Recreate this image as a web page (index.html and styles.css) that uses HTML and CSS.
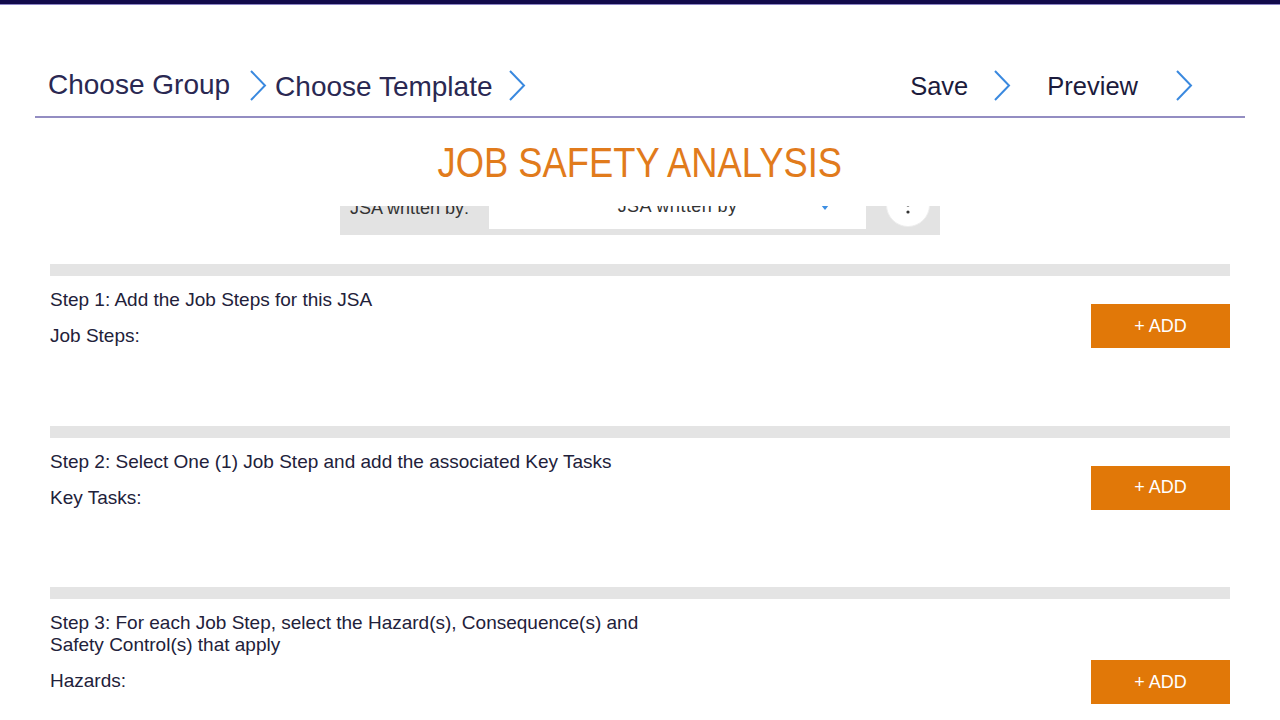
FILE: index.html
```html
<!DOCTYPE html>
<html lang="en">
<head>
<meta charset="utf-8">
<title>Job Safety Analysis</title>
<link rel="stylesheet" href="styles.css">
</head>
<body>
<div class="topbar"></div>
<nav class="nav">
  <div class="crumbs">
    <span class="crumb">Choose Group</span>
    <svg class="chev chev--tight" viewBox="0 0 18 31" width="18" height="31"><polyline points="2,1 16,15.5 2,30"/></svg>
    <span class="crumb crumb--low">Choose Template</span>
    <svg class="chev chev--after" viewBox="0 0 18 31" width="18" height="31"><polyline points="2,1 16,15.5 2,30"/></svg>
  </div>
  <div class="actions">
    <span class="action">Save</span>
    <svg class="chev chev--save" viewBox="0 0 18 31" width="18" height="31"><polyline points="2,1 16,15.5 2,30"/></svg>
    <span class="action">Preview</span>
    <svg class="chev chev--preview" viewBox="0 0 18 31" width="18" height="31"><polyline points="2,1 16,15.5 2,30"/></svg>
  </div>
</nav>
<header class="title-wrap">
  <h1 class="title">JOB SAFETY ANALYSIS</h1>
</header>
<main class="scroll">
  <div class="scroll-inner">
    <div class="jsa-row">
      <span class="jsa-label">JSA written by:</span>
      <div class="jsa-input">
        <span class="jsa-value">JSA written by</span>
        <svg class="jsa-caret" viewBox="0 0 8 5" width="8" height="5"><polygon points="0,0 8,0 4,5"/></svg>
      </div>
      <div class="jsa-more">
        <svg viewBox="0 0 44 44" width="44" height="44"><circle cx="22" cy="22" r="21.5" class="more-bg"/><circle cx="22" cy="15" r="1.6" class="more-dot"/><circle cx="22" cy="22" r="1.6" class="more-dot"/><circle cx="22" cy="29" r="1.6" class="more-dot"/></svg>
      </div>
    </div>

    <section class="section">
      <div class="bar"></div>
      <div class="section-body">
        <div class="section-text">
          <p class="step">Step 1: Add the Job Steps for this JSA</p>
          <p class="label">Job Steps:</p>
        </div>
        <button class="add">+ ADD</button>
      </div>
    </section>

    <section class="section">
      <div class="bar"></div>
      <div class="section-body">
        <div class="section-text">
          <p class="step">Step 2: Select One (1) Job Step and add the associated Key Tasks</p>
          <p class="label">Key Tasks:</p>
        </div>
        <button class="add">+ ADD</button>
      </div>
    </section>

    <section class="section">
      <div class="bar"></div>
      <div class="section-body">
        <div class="section-text">
          <p class="step">Step 3: For each Job Step, select the Hazard(s), Consequence(s) and Safety Control(s) that apply</p>
          <p class="label">Hazards:</p>
        </div>
        <button class="add add--low">+ ADD</button>
      </div>
    </section>
  </div>
</main>
</body>
</html>
```

FILE: styles.css
```css
html, body {
  margin: 0;
  padding: 0;
  background: #ffffff;
}

body {
  width: 1280px;
  height: 720px;
  overflow: hidden;
  font-family: "Liberation Sans", Arial, sans-serif;
  color: #22213a;
}

.topbar {
  height: 4px;
  background: #120b4b;
  border-bottom: 1px solid #8d86c6;
}

.nav {
  margin: 0 35px;
  height: 113px;
  box-sizing: border-box;
  padding: 66px 52px 16px 13px;
  border-bottom: 2px solid #938dc2;
  display: flex;
  justify-content: space-between;
  align-items: center;
}

.crumbs,
.actions {
  display: flex;
  align-items: center;
  height: 31px;
}

.crumb {
  font-size: 28px;
  color: #2a2852;
  line-height: 31px;
  position: relative;
  top: -1px;
}

.crumb--low {
  top: 1px;
}

.action {
  font-size: 25.5px;
  color: #1c1b3c;
  line-height: 31px;
  position: relative;
  top: 1px;
}

.chev {
  display: block;
  flex: none;
}

.chev polyline {
  fill: none;
  stroke: #3a89df;
  stroke-width: 2;
  stroke-linejoin: miter;
}

.chev--tight { margin: 0 8px 0 19px; }
.chev--after { margin-left: 15px; }
.chev--save { margin: 0 36px 0 25px; }
.chev--preview { margin-left: 37px; }

.title-wrap {
  height: 88px;
  box-sizing: border-box;
  padding-top: 2px;
  display: flex;
  align-items: center;
  justify-content: center;
}

.title {
  display: inline-block;
  margin: 0;
  font-weight: normal;
  font-size: 42px;
  line-height: 42px;
  color: #e17b1c;
  transform: scaleX(0.865);
}

.scroll {
  height: 512px;
  overflow: hidden;
}

.scroll-inner {
  margin-top: -27px;
}

.jsa-row {
  width: 600px;
  height: 56px;
  margin: 0 auto;
  box-sizing: border-box;
  padding: 6px 10px 6px 10px;
  background: #e3e3e3;
  display: flex;
  align-items: center;
}

.jsa-label {
  width: 139px;
  flex: none;
  font-size: 18px;
  color: #333333;
  position: relative;
  top: 1px;
}

.jsa-input {
  width: 377px;
  height: 44px;
  flex: none;
  background: #ffffff;
  display: flex;
  align-items: center;
  justify-content: center;
  position: relative;
}

.jsa-value {
  font-size: 18px;
  color: #333333;
  letter-spacing: 0.4px;
  position: relative;
  top: -1px;
}

.jsa-caret {
  position: absolute;
  right: 37px;
  top: 20px;
}

.jsa-caret polygon {
  fill: #3d8fe3;
}

.jsa-more {
  margin-left: 20px;
  width: 44px;
  height: 44px;
  flex: none;
  position: relative;
  top: -2px;
}

.jsa-more svg {
  display: block;
}

.more-bg {
  fill: #ffffff;
  stroke: #eeeeee;
  stroke-width: 1;
}

.more-dot {
  fill: #333333;
}

.section {
  margin: 0 50px;
}

.section:first-of-type {
  margin-top: 29px;
}

.bar {
  height: 12px;
  background: #e4e4e4;
}

.section-body {
  height: 149.5px;
  display: flex;
  justify-content: space-between;
  align-items: flex-start;
}

.section-text {
  padding-top: 13px;
  max-width: 620px;
}

.step,
.label {
  margin: 0;
  font-size: 19px;
  line-height: 22px;
  color: #22213a;
}

.label {
  margin-top: 14px;
}

.add {
  margin-top: 28px;
  width: 139px;
  height: 44px;
  border: none;
  border-radius: 0;
  padding: 0;
  background: #e17808;
  color: #ffffff;
  font-family: "Liberation Sans", Arial, sans-serif;
  font-size: 18px;
  cursor: pointer;
}

.add--low {
  margin-top: 61px;
}
```
